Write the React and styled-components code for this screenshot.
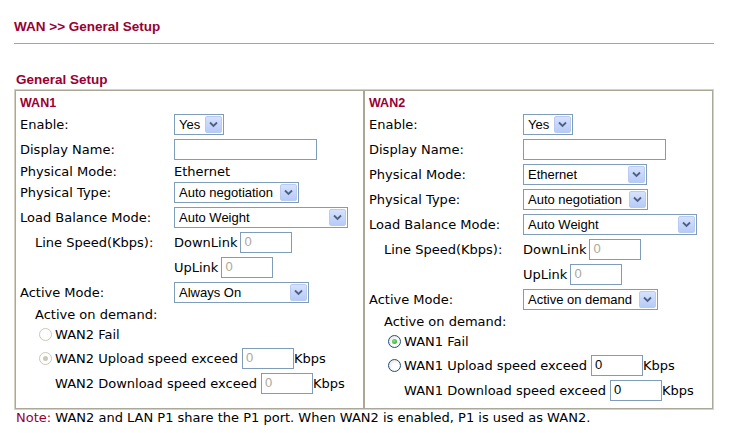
import React from "react";
import styled, { createGlobalStyle } from "styled-components";

const GlobalStyle = createGlobalStyle`
  body {
    margin: 0;
    background: #ffffff;
    font-family: "DejaVu Sans", Verdana, sans-serif;
    font-size: 13px;
    color: #000000;
  }
`;

const Page = styled.div`
  width: 700px;
  padding: 20px 0 0 14px;
`;

const PageTitle = styled.div`
  font-family: "Liberation Sans", Arial, sans-serif;
  font-weight: bold;
  font-size: 13.5px;
  line-height: 14px;
  color: #990033;
`;

const Rule = styled.div`
  height: 1px;
  background: #a8a596;
  margin-top: 9px;
`;

const SectionTitle = styled.div`
  font-family: "Liberation Sans", Arial, sans-serif;
  font-weight: bold;
  font-size: 13.5px;
  line-height: 14px;
  color: #990033;
  margin: 29px 0 2px 2px;
`;

const Table = styled.div`
  display: flex;
  border: 1px solid #d6d2c2;
`;

const Cell = styled.div`
  width: ${(p) => p.$w}px;
  flex: ${(p) => (p.$w ? "none" : "1")};
  box-sizing: border-box;
  border: 1px solid #aca899;
  padding: 0 0 5px 4px;
`;

const CellTitle = styled.div`
  height: 21px;
  padding-top: 5px;
  box-sizing: border-box;
  font-family: "Liberation Sans", Arial, sans-serif;
  font-weight: bold;
  font-size: 12.5px;
  line-height: 14px;
  color: #990033;
`;

const Row = styled.div`
  display: flex;
  align-items: center;
  height: ${(p) => p.$h || 25}px;
  padding-left: ${(p) => p.$indent || 0}px;
  white-space: nowrap;
`;

const Label = styled.div`
  width: 154px;
  flex: none;
  box-sizing: border-box;
  padding-left: ${(p) => p.$indent || 0}px;
`;

const Plain = styled.span`
  margin-right: ${(p) => p.$gap || 0}px;
`;

const SelectBox = styled.div`
  display: flex;
  align-items: center;
  width: ${(p) => p.$w}px;
  height: 21px;
  box-sizing: border-box;
  border: 1px solid #7f9db9;
  background: #ffffff;
  font-family: "Liberation Sans", Arial, sans-serif;
  font-size: 13px;
  padding: 0 1px 0 4px;
`;

const SelectText = styled.span`
  flex: 1;
`;

const Arrow = styled.div`
  width: 17px;
  height: 17px;
  box-sizing: border-box;
  border: 1px solid #b9cbf3;
  border-radius: 2px;
  background: linear-gradient(#d6e2fd, #b7cbf7);
  display: flex;
  align-items: center;
  justify-content: center;
`;

const TextBox = styled.div`
  width: ${(p) => p.$w}px;
  height: 21px;
  flex: none;
  box-sizing: border-box;
  border: 1px solid #7f9db9;
  background: #ffffff;
  font-family: "Liberation Sans", Arial, sans-serif;
  font-size: 13px;
  line-height: 17px;
  padding-left: 3px;
  color: ${(p) => (p.$disabled ? "#aca899" : "#000000")};
`;

const RadioDot = styled.span`
  width: 13px;
  height: 13px;
  box-sizing: border-box;
  flex: none;
  border-radius: 50%;
  border: 1px solid ${(p) => (p.$disabled ? "#cac8bb" : "#1c5180")};
  background: ${(p) =>
    p.$disabled ? "#ffffff" : "radial-gradient(circle at 60% 60%, #ffffff 30%, #dcdad0)"};
  display: flex;
  align-items: center;
  justify-content: center;
  margin-right: 3px;
  &::after {
    content: "";
    display: ${(p) => (p.$checked ? "block" : "none")};
    width: 5px;
    height: 5px;
    border-radius: 50%;
    background: ${(p) => (p.$disabled ? "#cac8bb" : "radial-gradient(circle at 40% 40%, #7fe27f, #21a121)")};
  }
`;

const Note = styled.div`
  line-height: 14px;
  margin: 1px 0 0 2px;
  white-space: nowrap;
`;

const NoteKey = styled.span`
  color: #990033;
`;

const Select = ({ w, children }) => (
  <SelectBox $w={w}>
    <SelectText>{children}</SelectText>
    <Arrow>
      <svg width="9" height="7" viewBox="0 0 9 7">
        <path d="M1 1.5 L4.5 5 L8 1.5" fill="none" stroke="#4d6185" strokeWidth="1.8" />
      </svg>
    </Arrow>
  </SelectBox>
);

const WanCell = ({ data, w }) => (
  <Cell $w={w}>
    <CellTitle>{data.name}</CellTitle>
    <Row>
      <Label>Enable:</Label>
      <Select w={50}>Yes</Select>
    </Row>
    <Row>
      <Label>Display Name:</Label>
      <TextBox $w={143} />
    </Row>
    {data.modeSelect ? (
      <Row>
        <Label>Physical Mode:</Label>
        <Select w={124}>Ethernet</Select>
      </Row>
    ) : (
      <Row $h={18}>
        <Label>Physical Mode:</Label>
        <span>Ethernet</span>
      </Row>
    )}
    <Row>
      <Label>Physical Type:</Label>
      <Select w={125}>Auto negotiation</Select>
    </Row>
    <Row>
      <Label>Load Balance Mode:</Label>
      <Select w={174}>Auto Weight</Select>
    </Row>
    <Row>
      <Label $indent={15}>Line Speed(Kbps):</Label>
      <Plain $gap={3}>DownLink</Plain>
      <TextBox $w={52} $disabled>0</TextBox>
    </Row>
    <Row>
      <Label />
      <Plain $gap={3}>UpLink</Plain>
      <TextBox $w={52} $disabled>0</TextBox>
    </Row>
    <Row>
      <Label>Active Mode:</Label>
      <Select w={135}>{data.activeMode}</Select>
    </Row>
    <Row $h={18} $indent={15}>
      Active on demand:
    </Row>
    <Row $h={23} $indent={data.radioIndent}>
      <RadioDot $disabled={data.disabled} $checked={data.failChecked} />
      {data.other} Fail
    </Row>
    <Row $indent={data.radioIndent}>
      <RadioDot $disabled={data.disabled} $checked={!data.failChecked} />
      <Plain $gap={4}>{data.other} Upload speed exceed</Plain>
      <TextBox $w={52} $disabled={data.disabled}>0</TextBox>
      Kbps
    </Row>
    <Row $indent={data.radioIndent + 16}>
      <Plain $gap={4}>{data.other} Download speed exceed</Plain>
      <TextBox $w={52} $disabled={data.disabled}>0</TextBox>
      Kbps
    </Row>
  </Cell>
);

const wans = [
  {
    name: "WAN1",
    other: "WAN2",
    activeMode: "Always On",
    disabled: true,
    failChecked: false,
    modeSelect: false,
    radioIndent: 19,
  },
  {
    name: "WAN2",
    other: "WAN1",
    activeMode: "Active on demand",
    disabled: false,
    failChecked: true,
    modeSelect: true,
    radioIndent: 19,
  },
];

const App = () => (
  <>
    <GlobalStyle />
    <Page>
      <PageTitle>WAN &gt;&gt; General Setup</PageTitle>
      <Rule />
      <SectionTitle>General Setup</SectionTitle>
      <Table>
        <WanCell data={wans[0]} w={349} />
        <WanCell data={wans[1]} />
      </Table>
      <Note>
        <NoteKey>Note:</NoteKey> WAN2 and LAN P1 share the P1 port. When WAN2 is enabled, P1 is used as WAN2.
      </Note>
    </Page>
  </>
);

export default App;
